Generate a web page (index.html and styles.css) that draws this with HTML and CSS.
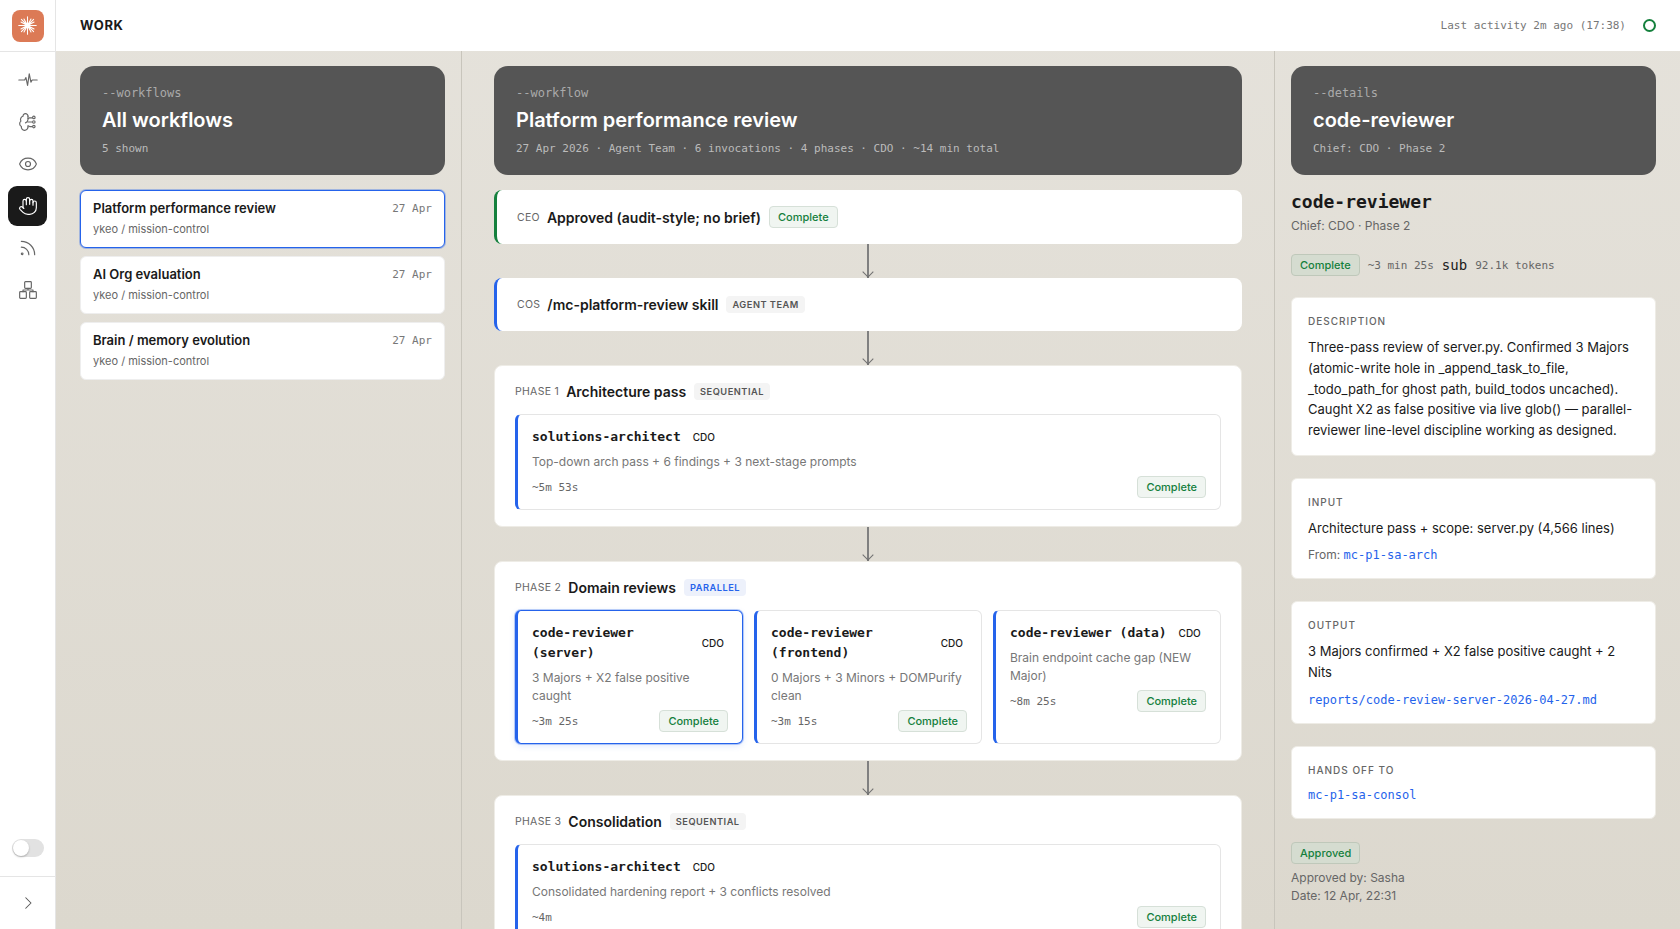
FILE: index.html
```html
<!DOCTYPE html>
<html lang="en">

<head>
    <meta charset="UTF-8">
    <meta name="viewport" content="width=device-width, initial-scale=1.0">
    <title>Work</title>
    <link rel="stylesheet" href="styles.css">
</head>

<body>
    <nav class="rail">
        <div class="rail-top">
            <div class="logo">
                <svg viewBox="0 0 24 24" width="21" height="21" fill="none" stroke="#fff" stroke-width="1.2" stroke-linecap="round">
                    <circle cx="12" cy="12" r="2.5" fill="#fff" stroke="none"/>
                    <path d="M12 2v20M2 12h20M5 5l14 14M19 5L5 19M8 4.500l8 15M16 4.500l-8 15M4.500 8l15 8M19.500 8l-15 8"/>
                </svg>
            </div>
        </div>
        <div class="rail-nav">
            <a class="rail-item">
                <svg viewBox="0 0 24 24" class="icon"><path d="M1 12h7l1.500-3 2 9.500 2-14 2 10 1.500-2.500H23"/></svg>
            </a>
            <a class="rail-item">
                <svg viewBox="0 0 24 24" class="icon"><path d="M12 5a3 3 0 1 0-5.997.125 4 4 0 0 0-2.526 5.770 4 4 0 0 0 .556 6.588A4 4 0 1 0 12 18"/><path d="M12 5v3M12 17v1"/><path d="M9 13a4.500 4.500 0 0 0 3-4"/><path d="M12 12h5M12 8l2-1h3M12 16.500l2 1h3"/><circle cx="19" cy="6.500" r="1.500"/><circle cx="19" cy="12" r="1.500"/><circle cx="19" cy="17.500" r="1.500"/></svg>
            </a>
            <a class="rail-item">
                <svg viewBox="0 0 24 24" class="icon"><path d="M2.062 12.348a1 1 0 0 1 0-.696 10.750 10.750 0 0 1 19.876 0 1 1 0 0 1 0 .696 10.750 10.750 0 0 1-19.876 0"/><circle cx="12" cy="12" r="3"/></svg>
            </a>
            <a class="rail-item active">
                <svg viewBox="0 0 24 24" class="icon"><path d="M18 11V6a2 2 0 0 0-4 0"/><path d="M14 10V4a2 2 0 0 0-4 0v2"/><path d="M10 10.500V6a2 2 0 0 0-4 0v8"/><path d="M18 8a2 2 0 1 1 4 0v6a8 8 0 0 1-8 8h-2c-2.800 0-4.500-.860-5.990-2.340l-3.600-3.600a2 2 0 0 1 2.830-2.820L7 15"/></svg>
            </a>
            <a class="rail-item">
                <svg viewBox="0 0 24 24" class="icon"><path d="M4 11a9 9 0 0 1 9 9"/><path d="M4 4a16 16 0 0 1 16 16"/><circle cx="5" cy="19" r="1"/></svg>
            </a>
            <a class="rail-item">
                <svg viewBox="0 0 24 24" class="icon"><rect x="8" y="2" width="8" height="8" rx="1"/><rect x="2" y="14" width="8" height="8" rx="1"/><rect x="14" y="14" width="8" height="8" rx="1"/><path d="M6 14v-2h12v2M12 10v2"/></svg>
            </a>
        </div>
        <div class="rail-toggle"><span class="toggle"></span></div>
        <div class="rail-foot">
            <svg viewBox="0 0 24 24" class="icon small"><path d="M9 5l7 7-7 7"/></svg>
        </div>
    </nav>

    <div class="main">
        <header class="topbar">
            <h1>WORK</h1>
            <div class="activity">
                <span>Last activity 2m ago (17:38)</span>
                <i class="dot"></i>
            </div>
        </header>

        <div class="columns">
            <section class="col col-list">
                <div class="hero">
                    <p class="hero-tag">--workflows</p>
                    <h2>All workflows</h2>
                    <p class="hero-sub">5 shown</p>
                </div>
                <div class="wf selected">
                    <div class="wf-row"><b>Platform performance review</b><span>27 Apr</span></div>
                    <p>ykeo / mission-control</p>
                </div>
                <div class="wf">
                    <div class="wf-row"><b>AI Org evaluation</b><span>27 Apr</span></div>
                    <p>ykeo / mission-control</p>
                </div>
                <div class="wf">
                    <div class="wf-row"><b>Brain / memory evolution</b><span>27 Apr</span></div>
                    <p>ykeo / mission-control</p>
                </div>
            </section>

            <section class="col col-flow">
                <div class="hero">
                    <p class="hero-tag">--workflow</p>
                    <h2>Platform performance review</h2>
                    <p class="hero-sub">27 Apr 2026 · Agent Team · 6 invocations · 4 phases · CDO · ~14 min total</p>
                </div>

                <div class="step green">
                    <span class="step-who">CEO</span>
                    <b>Approved (audit-style; no brief)</b>
                    <span class="badge">Complete</span>
                </div>
                <div class="arrow"></div>
                <div class="step blue">
                    <span class="step-who">COS</span>
                    <b>/mc-platform-review skill</b>
                    <span class="tag">AGENT TEAM</span>
                </div>
                <div class="arrow"></div>

                <div class="phase">
                    <div class="phase-head">
                        <span class="step-who">PHASE 1</span>
                        <b>Architecture pass</b>
                        <span class="tag">SEQUENTIAL</span>
                    </div>
                    <div class="agent">
                        <div class="agent-name"><code>solutions-architect</code><span>CDO</span></div>
                        <p class="agent-desc">Top-down arch pass + 6 findings + 3 next-stage prompts</p>
                        <div class="agent-foot"><span>~5m 53s</span><span class="badge">Complete</span></div>
                    </div>
                </div>
                <div class="arrow"></div>

                <div class="phase">
                    <div class="phase-head">
                        <span class="step-who">PHASE 2</span>
                        <b>Domain reviews</b>
                        <span class="tag tag-blue">PARALLEL</span>
                    </div>
                    <div class="agent-grid">
                        <div class="agent selected">
                            <div class="agent-name"><code>code-reviewer (server)</code><span>CDO</span></div>
                            <p class="agent-desc">3 Majors + X2 false positive caught</p>
                            <div class="agent-foot"><span>~3m 25s</span><span class="badge">Complete</span></div>
                        </div>
                        <div class="agent">
                            <div class="agent-name"><code>code-reviewer (frontend)</code><span>CDO</span></div>
                            <p class="agent-desc">0 Majors + 3 Minors + DOMPurify clean</p>
                            <div class="agent-foot"><span>~3m 15s</span><span class="badge">Complete</span></div>
                        </div>
                        <div class="agent">
                            <div class="agent-name"><code>code-reviewer (data)</code><span>CDO</span></div>
                            <p class="agent-desc">Brain endpoint cache gap (NEW Major)</p>
                            <div class="agent-foot"><span>~8m 25s</span><span class="badge">Complete</span></div>
                        </div>
                    </div>
                </div>
                <div class="arrow"></div>

                <div class="phase">
                    <div class="phase-head">
                        <span class="step-who">PHASE 3</span>
                        <b>Consolidation</b>
                        <span class="tag">SEQUENTIAL</span>
                    </div>
                    <div class="agent">
                        <div class="agent-name"><code>solutions-architect</code><span>CDO</span></div>
                        <p class="agent-desc">Consolidated hardening report + 3 conflicts resolved</p>
                        <div class="agent-foot"><span>~4m</span><span class="badge">Complete</span></div>
                    </div>
                </div>
            </section>

            <section class="col col-detail">
                <div class="hero">
                    <p class="hero-tag">--details</p>
                    <h2>code-reviewer</h2>
                    <p class="hero-sub">Chief: CDO · Phase 2</p>
                </div>

                <h3 class="detail-name">code-reviewer</h3>
                <p class="detail-sub">Chief: CDO · Phase 2</p>
                <div class="detail-meta">
                    <span class="badge on-bg">Complete</span>
                    <span>~3 min 25s</span>
                    <code>sub</code>
                    <span>92.1k tokens</span>
                </div>

                <div class="box">
                    <h4>DESCRIPTION</h4>
                    <p>Three-pass review of server.py. Confirmed 3 Majors (atomic-write hole in _append_task_to_file, _todo_path_for ghost path, build_todos uncached). Caught X2 as false positive via live glob() — parallel-reviewer line-level discipline working as designed.</p>
                </div>
                <div class="box">
                    <h4>INPUT</h4>
                    <p>Architecture pass + scope: server.py (4,566 lines)</p>
                    <p class="box-link"><span>From: </span><a>mc-p1-sa-arch</a></p>
                </div>
                <div class="box">
                    <h4>OUTPUT</h4>
                    <p>3 Majors confirmed + X2 false positive caught + 2 Nits</p>
                    <p class="box-link file"><a>reports/code-review-server-2026-04-27.md</a></p>
                </div>
                <div class="box">
                    <h4>HANDS OFF TO</h4>
                    <p class="box-link only"><a>mc-p1-sa-consol</a></p>
                </div>

                <span class="badge on-bg">Approved</span>
                <p class="approved">Approved by: Sasha<br>Date: 12 Apr, 22:31</p>
            </section>
        </div>
    </div>
</body>

</html>
```

FILE: styles.css
```css
* {
    margin: 0;
    padding: 0;
    box-sizing: border-box;
}

html,
body {
    height: 100%;
    overflow: hidden;
}

body {
    display: flex;
    font-family: Inter, "Liberation Sans", sans-serif;
    color: #1a1a1a;
    background: #e0dcd4;
}

code,
.hero-tag,
.hero-sub {
    font-family: "DejaVu Sans Mono", "Liberation Mono", monospace;
}

/* left rail */
.rail {
    width: 56px;
    flex: none;
    display: flex;
    flex-direction: column;
    background: #fff;
    border-right: 1px solid #e5e5e5;
}

.rail-top {
    height: 52px;
    display: flex;
    align-items: center;
    justify-content: center;
    border-bottom: 1px solid #e5e5e5;
}

.logo {
    width: 32px;
    height: 32px;
    border-radius: 8px;
    background: #dc7a56;
    display: flex;
    align-items: center;
    justify-content: center;
}

.rail-nav {
    flex: 1;
    display: flex;
    flex-direction: column;
    align-items: center;
    gap: 2px;
    padding-top: 8px;
}

.rail-item {
    width: 39px;
    height: 40px;
    border-radius: 9px;
    display: flex;
    align-items: center;
    justify-content: center;
    color: #666;
}

.rail-item.active {
    background: #1a1a1a;
    color: #fff;
}

.icon {
    width: 20px;
    height: 20px;
    fill: none;
    stroke: currentColor;
    stroke-width: 1.4;
    stroke-linecap: round;
    stroke-linejoin: round;
}

.icon.small {
    width: 18px;
    height: 18px;
    color: #555;
}

.rail-toggle {
    height: 37px;
    display: flex;
    justify-content: center;
}

.toggle {
    width: 32px;
    height: 18px;
    border-radius: 9px;
    background: #e2e2e2;
    padding: 1px;
}

.toggle::before {
    content: "";
    display: block;
    width: 16px;
    height: 16px;
    border-radius: 50%;
    background: #fff;
    box-shadow: 0 1px 2px rgba(0, 0, 0, .25);
}

.rail-foot {
    height: 53px;
    border-top: 1px solid #e5e5e5;
    display: flex;
    align-items: center;
    justify-content: center;
}

/* top bar */
.main {
    flex: 1;
    min-width: 0;
    display: flex;
    flex-direction: column;
    background: linear-gradient(#e5e2db, #dcd8ce);
}

.topbar {
    height: 51px;
    flex: none;
    background: #fff;
    display: flex;
    align-items: center;
    justify-content: space-between;
    padding: 0 24px;
}

.topbar h1 {
    font-size: 13px;
    font-weight: 700;
    letter-spacing: .6px;
    margin-bottom: 2px;
}

.activity {
    display: flex;
    align-items: center;
    gap: 17px;
    font-family: "DejaVu Sans Mono", "Liberation Mono", monospace;
    font-size: 11px;
    color: #777;
}

.dot {
    width: 13px;
    height: 13px;
    border-radius: 50%;
    border: 2px solid #15803d;
}

/* three columns */
.columns {
    flex: 1;
    min-height: 0;
    display: grid;
    grid-template-columns: 406px 813px 1fr;
}

.col {
    padding: 15px 24px 0;
    overflow: hidden;
}

.col-list {
    padding-right: 16px;
    border-right: 1px solid #c8c5bc;
}

.col-flow {
    padding: 15px 32px 0;
    border-right: 1px solid #c8c5bc;
}

.col-detail {
    padding-left: 16px;
}

.hero {
    height: 109px;
    padding: 20px 22px;
    border-radius: 14px;
    background: #555;
    color: #fff;
    margin-bottom: 15px;
}

.hero-tag {
    font-size: 12px;
    line-height: 15px;
    color: #aaa;
}

.hero h2 {
    font-size: 20px;
    line-height: 28px;
    font-weight: 600;
    margin: 5px 0 7px;
}

.hero-sub {
    font-size: 11px;
    line-height: 15px;
    color: #bbb;
}

/* workflow list */
.wf {
    height: 58px;
    background: #fff;
    border: 1px solid #eee;
    border-radius: 6px;
    padding: 7px 12px;
    margin-bottom: 8px;
}

.wf.selected {
    border: 1px solid #2563eb;
    box-shadow: 0 0 0 1px rgba(37, 99, 235, .35);
}

.wf-row {
    display: flex;
    justify-content: space-between;
    align-items: center;
    height: 20px;
}

.wf-row b {
    font-size: 13px;
    font-weight: 600;
}

.wf-row span {
    font-family: "DejaVu Sans Mono", "Liberation Mono", monospace;
    font-size: 11px;
    color: #777;
}

.wf p {
    font-size: 11px;
    line-height: 16px;
    margin-top: 3px;
    color: #666;
}

/* flow */
.step {
    display: flex;
    align-items: center;
    gap: 8px;
    height: 54px;
    padding: 0 20px;
    background: #fff;
    border-left: 3px solid #2563eb;
    border-radius: 8px;
}

.step.blue {
    height: 53px;
}

.step.green {
    border-left-color: #15803d;
}

.step b,
.phase-head b {
    font-size: 14px;
    font-weight: 600;
}

.step-who {
    font-size: 10.500px;
    color: #666;
    letter-spacing: .3px;
    margin-right: -1px;
}

.badge {
    display: inline-block;
    height: 22px;
    line-height: 20px;
    padding: 0 8px;
    font-size: 11px;
    font-weight: 500;
    color: #15803d;
    background: #f0f5f1;
    border: 1px solid #d6e0d8;
    border-radius: 4px;
}

.badge.on-bg {
    background: #d5dcd0;
    border-color: #bfc8ba;
}

.tag {
    display: inline-block;
    height: 17px;
    line-height: 17px;
    padding: 0 6px;
    font-size: 9.250px;
    font-weight: 600;
    letter-spacing: .5px;
    color: #555;
    background: #f4f4f4;
    border-radius: 4px;
}

.tag-blue {
    color: #2563eb;
    background: #edf1fb;
}

.arrow {
    position: relative;
    width: 1.500px;
    height: 34px;
    margin: 0 auto;
    background: #808080;
}

.arrow::after {
    content: "";
    position: absolute;
    left: -3px;
    bottom: 2px;
    width: 7px;
    height: 7px;
    border-right: 1px solid #707070;
    border-bottom: 1px solid #707070;
    transform: rotate(45deg);
}

.phase {
    background: #fff;
    border: 1px solid #eeece6;
    border-radius: 8px;
    padding: 14px 20px 16px;
}

.phase-head {
    display: flex;
    align-items: center;
    gap: 8px;
    height: 22px;
    margin-bottom: 12px;
}

.agent {
    display: flex;
    flex-direction: column;
    border: 1px solid #e5e5e5;
    border-left: 3px solid #2563eb;
    border-radius: 6px;
    padding: 12px 14px 11px;
    background: #fff;
}

.agent.selected {
    border-color: #2563eb;
    box-shadow: 0 0 0 1px rgba(37, 99, 235, .3), 0 2px 6px rgba(37, 99, 235, .15);
}

.agent-name {
    display: flex;
    align-items: center;
    gap: 12px;
}

.agent-name code {
    font-size: 13px;
    line-height: 20px;
    font-weight: 700;
}

.agent-name span {
    font-size: 10px;
    font-weight: 500;
    padding-right: 4px;
}

.agent-desc {
    font-size: 12px;
    line-height: 18px;
    color: #777;
    margin-top: 6px;
}

.agent-foot {
    display: flex;
    align-items: center;
    justify-content: space-between;
    margin-top: 5px;
    font-family: "DejaVu Sans Mono", "Liberation Mono", monospace;
    font-size: 11px;
    color: #666;
}

.agent-foot .badge {
    font-family: Inter, "Liberation Sans", sans-serif;
}

.agent-grid {
    display: grid;
    grid-template-columns: repeat(3, 1fr);
    gap: 11px;
}

/* details */
.detail-name {
    font-family: "DejaVu Sans Mono", "Liberation Mono", monospace;
    font-size: 18px;
    font-weight: 700;
    line-height: 24px;
    margin-top: 2px;
}

.detail-sub {
    font-size: 12px;
    line-height: 18px;
    color: #666;
    margin-top: 3px;
}

.detail-meta {
    display: flex;
    align-items: center;
    gap: 8px;
    margin: 19px 0 21px;
    font-family: "DejaVu Sans Mono", "Liberation Mono", monospace;
    font-size: 11px;
    color: #666;
}

.detail-meta code {
    font-size: 14px;
    color: #1a1a1a;
}

.detail-meta .badge {
    font-family: Inter, "Liberation Sans", sans-serif;
}

.box {
    background: #fff;
    border: 1px solid #eeece6;
    border-radius: 6px;
    padding: 16px 16px 14px;
    margin-bottom: 22px;
}

.box h4 {
    font-size: 10px;
    font-weight: 500;
    letter-spacing: 1px;
    color: #666;
    line-height: 14px;
    margin-bottom: 9px;
}

.box p {
    font-size: 13px;
    line-height: 20.800px;
}

.box p.box-link {
    margin-top: 7px;
    line-height: 17px;
}

.box p.box-link.file {
    margin-top: 9px;
}

.box p.box-link.only {
    margin-top: 1px;
}

.box-link span {
    color: #666;
    font-size: 12px;
}

.box-link a {
    font-family: "DejaVu Sans Mono", "Liberation Mono", monospace;
    font-size: 12px;
    color: #2563eb;
}

.approved {
    font-size: 12px;
    line-height: 18px;
    color: #666;
    margin-top: 5px;
}
```
